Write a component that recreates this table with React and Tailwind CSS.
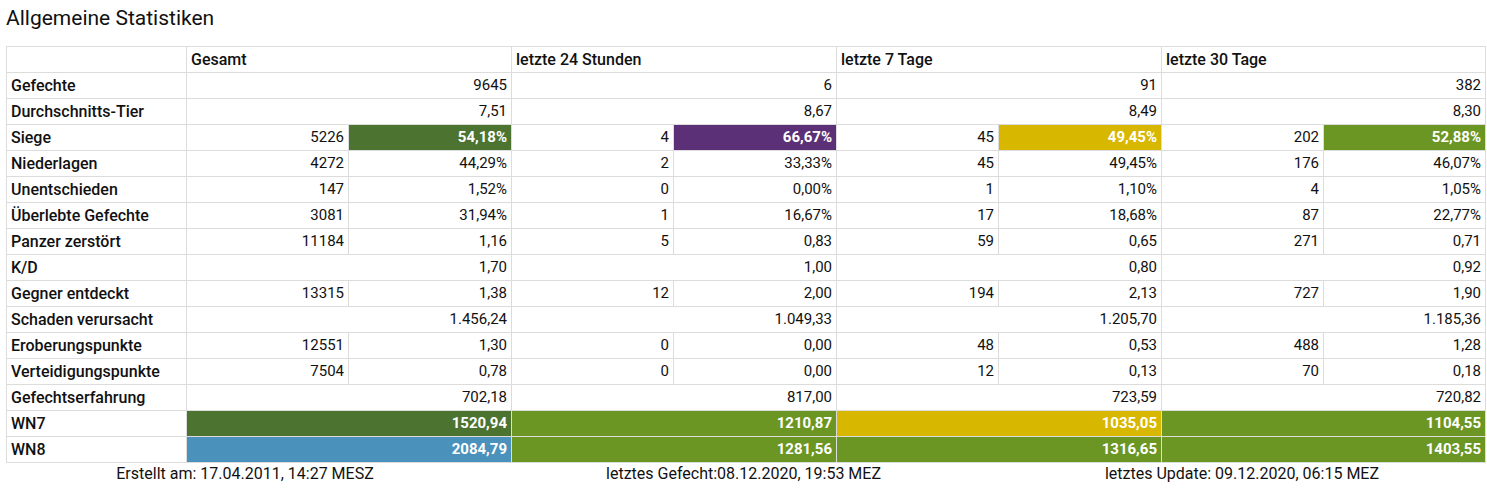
import React from "react";

const C = {
  dg: "bg-[#4d7330]",
  lg: "bg-[#6b9624]",
  ye: "bg-[#d8b700]",
  pu: "bg-[#5b3076]",
  bl: "bg-[#4a92bb]",
};

const rows = [
  { l: "Gefechte", s: ["9645", "6", "91", "382"] },
  { l: "Durchschnitts-Tier", s: ["7,51", "8,67", "8,49", "8,30"] },
  { l: "Siege", d: [["5226", "54,18%", C.dg], ["4", "66,67%", C.pu], ["45", "49,45%", C.ye], ["202", "52,88%", C.lg]] },
  { l: "Niederlagen", d: [["4272", "44,29%"], ["2", "33,33%"], ["45", "49,45%"], ["176", "46,07%"]] },
  { l: "Unentschieden", d: [["147", "1,52%"], ["0", "0,00%"], ["1", "1,10%"], ["4", "1,05%"]] },
  { l: "Überlebte Gefechte", d: [["3081", "31,94%"], ["1", "16,67%"], ["17", "18,68%"], ["87", "22,77%"]] },
  { l: "Panzer zerstört", d: [["11184", "1,16"], ["5", "0,83"], ["59", "0,65"], ["271", "0,71"]] },
  { l: "K/D", s: ["1,70", "1,00", "0,80", "0,92"] },
  { l: "Gegner entdeckt", d: [["13315", "1,38"], ["12", "2,00"], ["194", "2,13"], ["727", "1,90"]] },
  { l: "Schaden verursacht", s: ["1.456,24", "1.049,33", "1.205,70", "1.185,36"] },
  { l: "Eroberungspunkte", d: [["12551", "1,30"], ["0", "0,00"], ["48", "0,53"], ["488", "1,28"]] },
  { l: "Verteidigungspunkte", d: [["7504", "0,78"], ["0", "0,00"], ["12", "0,13"], ["70", "0,18"]] },
  { l: "Gefechtserfahrung", s: ["702,18", "817,00", "723,59", "720,82"] },
  { l: "WN7", s: [["1520,94", C.dg], ["1210,87", C.lg], ["1035,05", C.ye], ["1104,55", C.lg]] },
  { l: "WN8", s: [["2084,79", C.bl], ["1281,56", C.lg], ["1316,65", C.lg], ["1403,55", C.lg]] },
];

const td = "border border-[#dcdcdc] h-[26px] p-0 px-[4px] align-middle leading-[25px]";
const lbl = "text-[16px] font-medium text-left whitespace-nowrap";

export default function App() {
  return (
    <div className="bg-white text-[#111] w-[1487px] h-[492px]" style={{ fontFamily: "Roboto, 'Noto Sans', sans-serif" }}>
      <div className="pl-[6px] pt-[4px] h-[46px] text-[21px] leading-[28px]">Allgemeine Statistiken</div>
      <table className="ml-[6px] w-[1479px] table-fixed border-collapse text-[15px]">
        <colgroup>
          <col className="w-[180px]" />
          <col className="w-[162px]" />
          <col className="w-[163px]" />
          <col className="w-[162px]" />
          <col className="w-[163px]" />
          <col className="w-[162px]" />
          <col className="w-[163px]" />
          <col className="w-[162px]" />
          <col className="w-[162px]" />
        </colgroup>
        <tbody>
          <tr>
            <td className={td}></td>
            {["Gesamt", "letzte 24 Stunden", "letzte 7 Tage", "letzte 30 Tage"].map((h) => (
              <td key={h} colSpan={2} className={`${td} ${lbl}`}>{h}</td>
            ))}
          </tr>
          {rows.map((r) => (
            <tr key={r.l}>
              <td className={`${td} ${lbl}`}>{r.l}</td>
              {r.s &&
                r.s.map((v, i) => {
                  const val = Array.isArray(v) ? v[0] : v;
                  const bg = Array.isArray(v) ? v[1] : "";
                  return (
                    <td key={i} colSpan={2} className={`${td} text-right ${bg ? `${bg} text-white font-bold` : ""}`}>
                      {val}
                    </td>
                  );
                })}
              {r.d &&
                r.d.map((v, i) => (
                  <React.Fragment key={i}>
                    <td className={`${td} text-right`}>{v[0]}</td>
                    <td className={`${td} text-right ${v[2] ? `${v[2]} text-white font-bold` : ""}`}>{v[1]}</td>
                  </React.Fragment>
                ))}
            </tr>
          ))}
        </tbody>
      </table>
      <div className="flex text-[16px] leading-[20px] pt-[1px]">
        <div className="w-[491px] text-center">Erstellt am: 17.04.2011, 14:27 MESZ</div>
        <div className="w-[508px] text-center">letztes Gefecht:08.12.2020, 19:53 MEZ</div>
        <div className="w-[491px] text-center">letztes Update: 09.12.2020, 06:15 MEZ</div>
      </div>
    </div>
  );
}
